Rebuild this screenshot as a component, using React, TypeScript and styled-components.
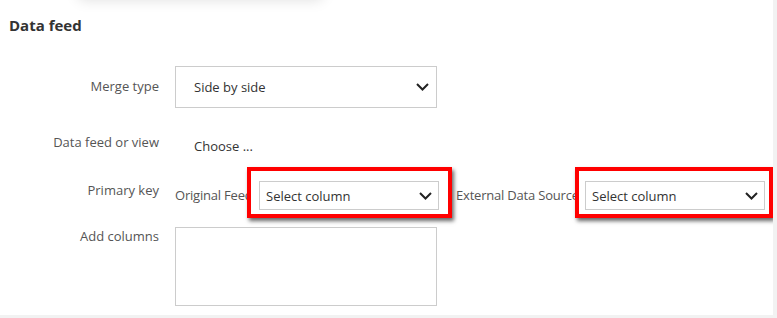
import styled, { createGlobalStyle } from 'styled-components';

const GlobalStyle = createGlobalStyle`
	body {
		margin: 0;
		background: #f2f2f2;
		font-family: 'Open Sans', 'Liberation Sans', sans-serif;
	}
`;

const Chevron = () => (
	<svg width='13' height='8' viewBox='0 0 13 8' fill='none'>
		<polyline points='1,1 6.5,6.5 12,1' stroke='#222' strokeWidth='2' strokeLinejoin='miter' />
	</svg>
);

export default function App() {
	return (
		<>
			<GlobalStyle />
			<Card>
				<PopoverShadow />
				<Heading>Data feed</Heading>
				<Form>
					<Row>
						<Label $offset={11}>Merge type</Label>
						<Select $height={42} $width={262} $pad={18} $arrowPad={7}>
							<span>Side by side</span>
							<Chevron />
						</Select>
					</Row>
					<Row>
						<Label $offset={9}>Data feed or view</Label>
						<Choose>Choose ...</Choose>
					</Row>
					<Row>
						<Label $offset={10}>Primary key</Label>
						<KeyFields>
							<InlineLabel $width={84}>Original Feed</InlineLabel>
							<Highlight $left={12} $right={13}>
								<Select $height={29} $width={180} $pad={6} $arrowPad={6}>
									<span>Select column</span>
									<Chevron />
								</Select>
							</Highlight>
							<InlineLabel $width={129} $gap={17}>External Data Source</InlineLabel>
							<Highlight $left={10} $right={8}>
								<Select $height={29} $width={180} $pad={6} $arrowPad={6}>
									<span>Select column</span>
									<Chevron />
								</Select>
							</Highlight>
						</KeyFields>
					</Row>
					<Row $top={1}>
						<Label $offset={0}>Add columns</Label>
						<TextBox />
					</Row>
				</Form>
			</Card>
		</>
	);
}

const Card = styled.div`
	position: relative;
	width: 773px;
	height: 315px;
	background: #fff;
	overflow: hidden;
	box-sizing: border-box;
	padding-top: 15px;
`;

const PopoverShadow = styled.div`
	position: absolute;
	top: -30px;
	left: 78px;
	width: 245px;
	height: 30px;
	background: #fff;
	box-shadow: 0 0 14px rgba(0, 0, 0, 0.13);
	border-radius: 6px;
`;

const Heading = styled.h2`
	margin: 0 0 31px 9px;
	font-size: 15px;
	line-height: 20px;
	font-weight: 700;
	color: #333;
`;

const Form = styled.div`
	display: flex;
	flex-direction: column;
	gap: 16px;
`;

const Row = styled.div<{ $top?: number }>`
	display: grid;
	grid-template-columns: 160px 1fr;
	column-gap: 15px;
	align-items: start;
	margin-top: ${(p) => p.$top ?? 0}px;
`;

const Label = styled.div<{ $offset: number }>`
	padding-top: ${(p) => p.$offset}px;
	padding-right: 1px;
	text-align: right;
	font-size: 13px;
	line-height: 18px;
	color: #555;
`;

const Select = styled.div<{ $height: number; $width: number; $pad: number; $arrowPad: number }>`
	position: relative;
	z-index: 1;
	box-sizing: border-box;
	display: flex;
	align-items: center;
	justify-content: space-between;
	width: ${(p) => p.$width}px;
	height: ${(p) => p.$height}px;
	padding: 0 ${(p) => p.$arrowPad}px 0 ${(p) => p.$pad}px;
	border: 1px solid #ccc;
	background: #fff;
	font-size: 13px;
	color: #333;
`;

const Choose = styled.div`
	padding: 13px 0 0 19px;
	font-size: 13px;
	line-height: 18px;
	color: #333;
`;

const KeyFields = styled.div`
	display: flex;
	align-items: center;
	padding-top: 10px;
`;

const InlineLabel = styled.span<{ $width: number; $gap?: number }>`
	flex: none;
	width: ${(p) => p.$width}px;
	margin-left: ${(p) => p.$gap ?? 0}px;
	white-space: nowrap;
	font-size: 13px;
	letter-spacing: -0.2px;
	color: #555;
	padding-bottom: 2px;
`;

const Highlight = styled.div<{ $left: number; $right: number }>`
	position: relative;
	flex: none;

	&::before {
		content: '';
		position: absolute;
		top: -14px;
		bottom: -8px;
		left: -${(p) => p.$left}px;
		right: -${(p) => p.$right}px;
		background: #fff;
		border: 4px solid #f00;
		box-shadow: 2px 3px 4px rgba(0, 0, 0, 0.6);
	}
`;

const TextBox = styled.textarea`
	display: block;
	box-sizing: border-box;
	width: 262px;
	height: 79px;
	margin: 0;
	border: 1px solid #ccc;
	resize: none;
	background: #fff;
`;
